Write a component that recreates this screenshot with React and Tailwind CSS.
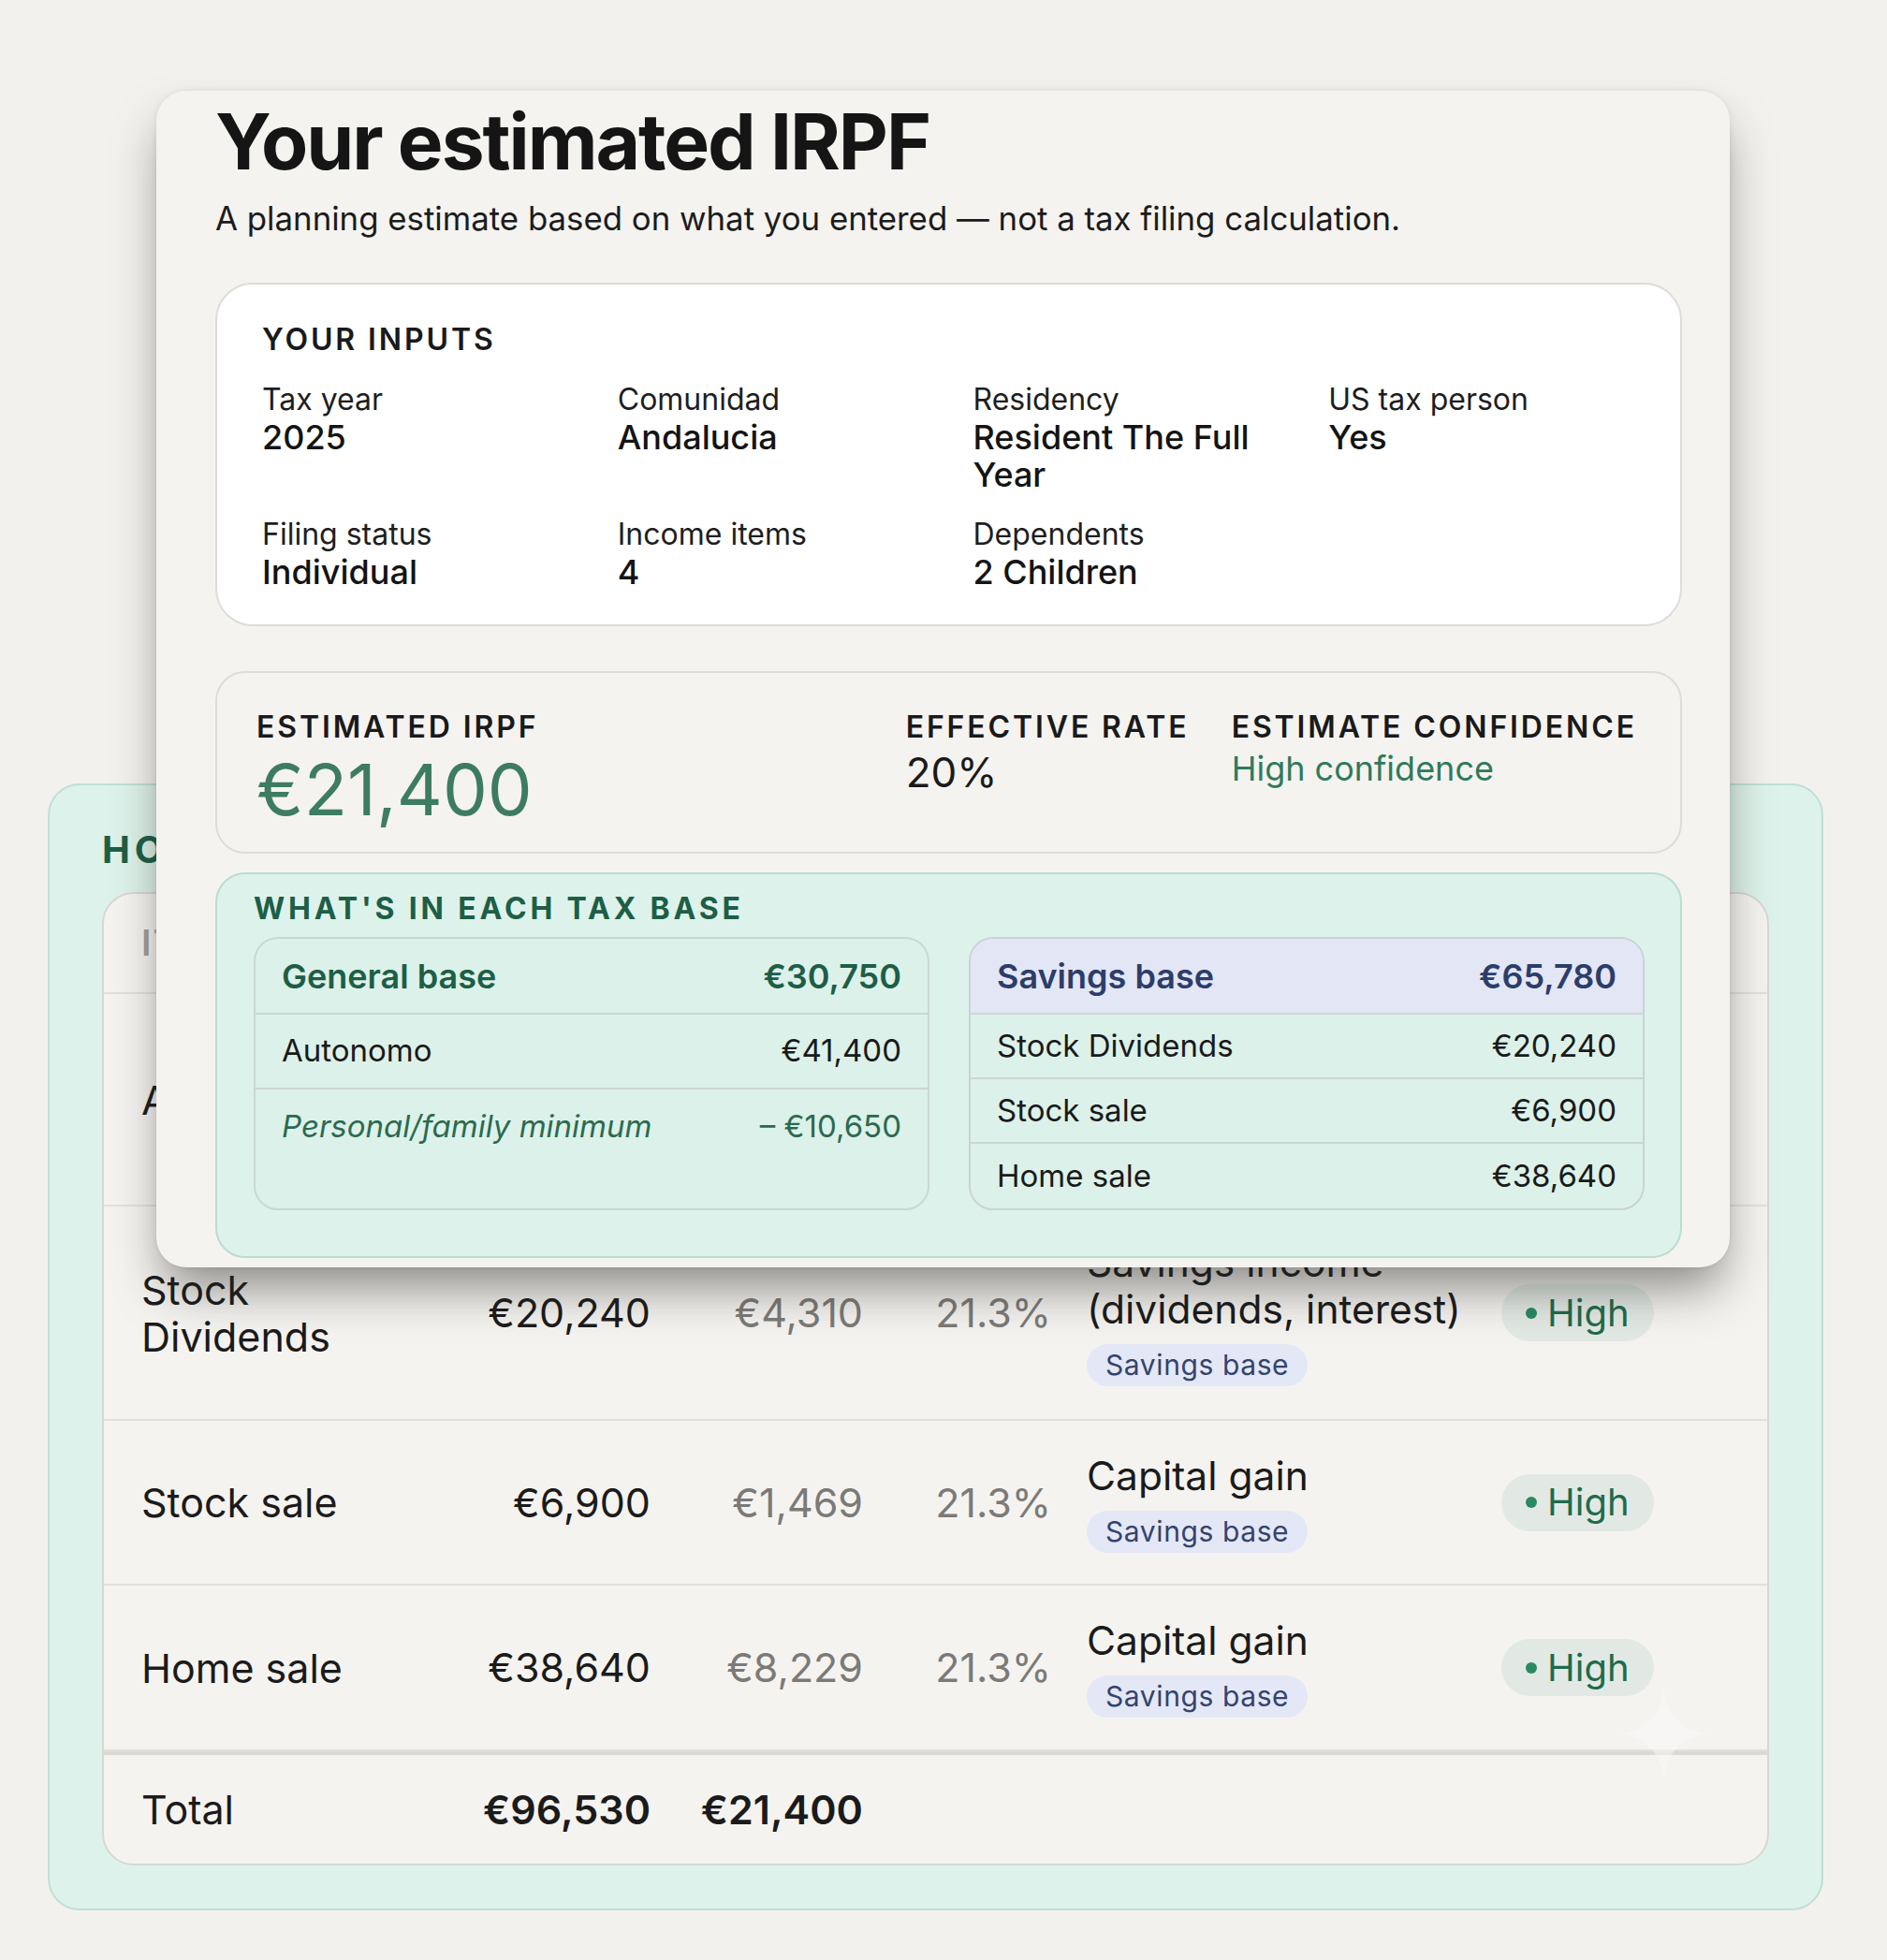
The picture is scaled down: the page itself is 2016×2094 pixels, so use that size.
import React from 'react';

const inputs = [
  { label: 'Tax year', value: '2025' },
  { label: 'Comunidad', value: 'Andalucia' },
  { label: 'Residency', value: 'Resident The Full Year' },
  { label: 'US tax person', value: 'Yes' },
  { label: 'Filing status', value: 'Individual' },
  { label: 'Income items', value: '4' },
  { label: 'Dependents', value: '2 Children' },
];

const savingsItems = [
  { name: 'Stock Dividends', amount: '€20,240' },
  { name: 'Stock sale', amount: '€6,900' },
  { name: 'Home sale', amount: '€38,640' },
];

const rows = [
  { name: 'Autonomo', amount: '€41,400', tax: '€9,091', rate: '22.0%', type: ['Self-employment', '(activity income)'], base: 'General base', h: 'h-[227px]' },
  { name: 'Stock Dividends', amount: '€20,240', tax: '€4,310', rate: '21.3%', type: ['Savings income', '(dividends, interest)'], base: 'Savings base', h: 'h-[229px]' },
  { name: 'Stock sale', amount: '€6,900', tax: '€1,469', rate: '21.3%', type: ['Capital gain'], base: 'Savings base', h: 'h-[176px]' },
  { name: 'Home sale', amount: '€38,640', tax: '€8,229', rate: '21.3%', type: ['Capital gain'], base: 'Savings base', h: 'h-[177px]' },
];

function HighPill() {
  return (
    <span className="inline-flex items-center gap-[11px] rounded-full bg-[#e2e9e4] pl-[26px] pr-[26px] h-[61px] text-[40px] text-[#1f6b4c]">
      <span className="w-[12px] h-[12px] rounded-full bg-[#2a8a62]" />
      High
    </span>
  );
}

function TableRow({ row }) {
  const generalBase = row.base === 'General base';
  return (
    <div className={`flex items-center border-b-2 border-[#e3e0dc] pl-[40px] ${row.h}`}>
      <div className="w-[242px] text-[43px] leading-[50px] text-[#1b1b1b]">{row.name}</div>
      <div className="w-[302px] text-right text-[43px] text-[#1b1b1b]">{row.amount}</div>
      <div className="w-[227px] text-right text-[43px] text-[#7b7a77]">{row.tax}</div>
      <div className="w-[201px] text-right text-[43px] text-[#7b7a77]">{row.rate}</div>
      <div className="ml-[38px] w-[443px] flex flex-col items-start">
        {row.type.map((t) => (
          <div key={t} className="text-[42.5px] leading-[50px] text-[#1b1b1b] whitespace-nowrap">{t}</div>
        ))}
        <span className={`mt-[12px] rounded-full px-[20px] h-[45px] flex items-center text-[30px] tracking-[0.02em] ${generalBase ? 'bg-[#d9efe6] text-[#1d5e47]' : 'bg-[#e4e7f6] text-[#33446e]'}`}>
          {row.base}
        </span>
      </div>
      <HighPill />
    </div>
  );
}

export default function App() {
  return (
    <div className="relative min-h-[2094px] w-full bg-[#f3f1ee] font-['Inter',sans-serif] overflow-hidden">
      {/* Background card: per-item breakdown */}
      <div className="pt-[837px] pl-[51px] pr-[68px] pb-[46px]">
        <div className="rounded-[34px] border-2 border-[#bfe0d4] bg-[#ddf2ea] pt-[44px] pb-[46px] px-[56px]">
          <h2 className="text-[40px] leading-[50px] font-bold tracking-[0.12em] text-[#1d5e47]">HOW EACH INCOME IS TAXED</h2>
          <div className="mt-[20px] rounded-[34px] border-2 border-[#d9d7d3] bg-[#f5f3f0] overflow-hidden">
            <div className="h-[107px] flex items-center border-b-2 border-[#e3e0dc] pl-[40px] text-[38px] font-semibold tracking-[0.06em] text-[#a09e9a]">
              <div className="w-[242px]">ITEM</div>
              <div className="w-[302px] text-right">AMOUNT</div>
              <div className="w-[227px] text-right">TAX</div>
              <div className="w-[201px] text-right">RATE</div>
              <div className="ml-[38px] w-[443px]">TYPE</div>
              <div>CONF.</div>
            </div>
            {rows.map((r) => (
              <TableRow key={r.name} row={r} />
            ))}
            <div className="h-[120px] flex items-center border-t-[4px] border-[#dcd9d5] pl-[40px] text-[43px] text-[#1b1b1b]">
              <div className="w-[242px]">Total</div>
              <div className="w-[302px] text-right font-semibold">€96,530</div>
              <div className="w-[227px] text-right font-semibold">€21,400</div>
            </div>
          </div>
        </div>
      </div>

      {/* faint sparkle mark */}
      <svg className="absolute left-[1730px] top-[1805px] opacity-50" width="95" height="95" viewBox="0 0 100 100">
        <path d="M50 0 C54 30 70 46 100 50 C70 54 54 70 50 100 C46 70 30 54 0 50 C30 46 46 30 50 0 Z" fill="#fbfaf8" />
      </svg>

      {/* Estimate modal */}
      <div className="absolute left-[167px] top-[97px] w-[1681px] rounded-[32px] bg-[#f5f3f0] pt-[14px] pl-[63px] pr-[51px] pb-[10px] shadow-[0_30px_50px_-8px_rgba(40,40,35,0.5),0_0_6px_rgba(0,0,0,0.08)]">
        <h1 className="text-[82px] leading-none font-bold tracking-[-0.025em] text-[#151515]">Your estimated IRPF</h1>
        <p className="mt-[18px] text-[34.8px] leading-[45px] text-[#1c1c1c]">
          A planning estimate based on what you entered — not a tax filing calculation.
        </p>

        {/* Inputs */}
        <div className="mt-[46px] rounded-[40px] border-2 border-[#dedcd8] bg-white pt-[39px] pb-[36px] px-[48px]">
          <div className="text-[32px] leading-[40px] font-semibold tracking-[0.09em] text-[#1a1a1a]">YOUR INPUTS</div>
          <div className="mt-[24px] grid grid-cols-4 gap-x-[52px] gap-y-[24px]">
            {inputs.map((i) => (
              <div key={i.label}>
                <div className="text-[32px] leading-[40px] text-[#1e1e1e]">{i.label}</div>
                <div className="text-[36px] leading-[40px] font-medium text-[#141414]">{i.value}</div>
              </div>
            ))}
          </div>
        </div>

        {/* Summary */}
        <div className="mt-[48px] rounded-[32px] border-2 border-[#dedcd8] bg-[#f5f3f0] pt-[38px] pb-[29px] pl-[42px] pr-[46px] flex">
          <div className="flex-1">
            <div className="text-[32px] leading-[40px] font-semibold tracking-[0.09em] text-[#1a1a1a]">ESTIMATED IRPF</div>
            <div className="mt-[8px] text-[76px] leading-none text-[#3d7c61]">€21,400</div>
          </div>
          <div className="w-[348px]">
            <div className="text-[32px] leading-[40px] font-semibold tracking-[0.09em] text-[#1a1a1a]">EFFECTIVE RATE</div>
            <div className="mt-[4px] text-[44px] leading-[48px] text-[#1a1a1a]">20%</div>
          </div>
          <div className="shrink-0">
            <div className="text-[32px] leading-[40px] font-semibold tracking-[0.09em] text-[#1a1a1a]">ESTIMATE CONFIDENCE</div>
            <div className="mt-[2px] text-[36px] leading-[44px] text-[#2f7a5a]">High confidence</div>
          </div>
        </div>

        {/* Tax bases */}
        <div className="mt-[20px] rounded-[32px] border-2 border-[#bcdccf] bg-[#ddf2ea] pt-[17px] pb-[49px] pl-[39px] pr-[38px]">
          <div className="text-[32px] leading-[40px] font-bold tracking-[0.12em] text-[#1d5e47]">WHAT'S IN EACH TAX BASE</div>
          <div className="mt-[10px] grid grid-cols-2 gap-[42px]">
            <div className="rounded-[26px] border-2 border-[#c9d8d2] bg-[#dcf1e9] overflow-hidden">
              <div className="h-[81px] flex items-center justify-between px-[28px] border-b-2 border-[#cbd7d2] text-[36px] font-semibold text-[#1d5e47]">
                <span>General base</span>
                <span>€30,750</span>
              </div>
              <div className="h-[80px] flex items-center justify-between px-[28px] border-b-2 border-[#cbd7d2] text-[33px] text-[#1a1a1a]">
                <span>Autonomo</span>
                <span>€41,400</span>
              </div>
              <div className="h-[80px] flex items-center justify-between px-[28px] text-[33px] text-[#2b6a50]">
                <span className="italic">Personal/family minimum</span>
                <span>– €10,650</span>
              </div>
            </div>
            <div className="rounded-[26px] border-2 border-[#c9d3d6] bg-[#dcf1e9] overflow-hidden">
              <div className="h-[81px] flex items-center justify-between px-[28px] border-b-2 border-[#cfd6dc] bg-[#e3e6f5] text-[36px] font-semibold text-[#2c3d6b]">
                <span>Savings base</span>
                <span>€65,780</span>
              </div>
              {savingsItems.map((s, idx) => (
                <div
                  key={s.name}
                  className={`h-[69px] flex items-center justify-between px-[28px] text-[33px] text-[#1a1a1a] ${idx < 2 ? 'border-b-2 border-[#cbd7d2]' : ''}`}
                >
                  <span>{s.name}</span>
                  <span>{s.amount}</span>
                </div>
              ))}
            </div>
          </div>
        </div>
      </div>
    </div>
  );
}
